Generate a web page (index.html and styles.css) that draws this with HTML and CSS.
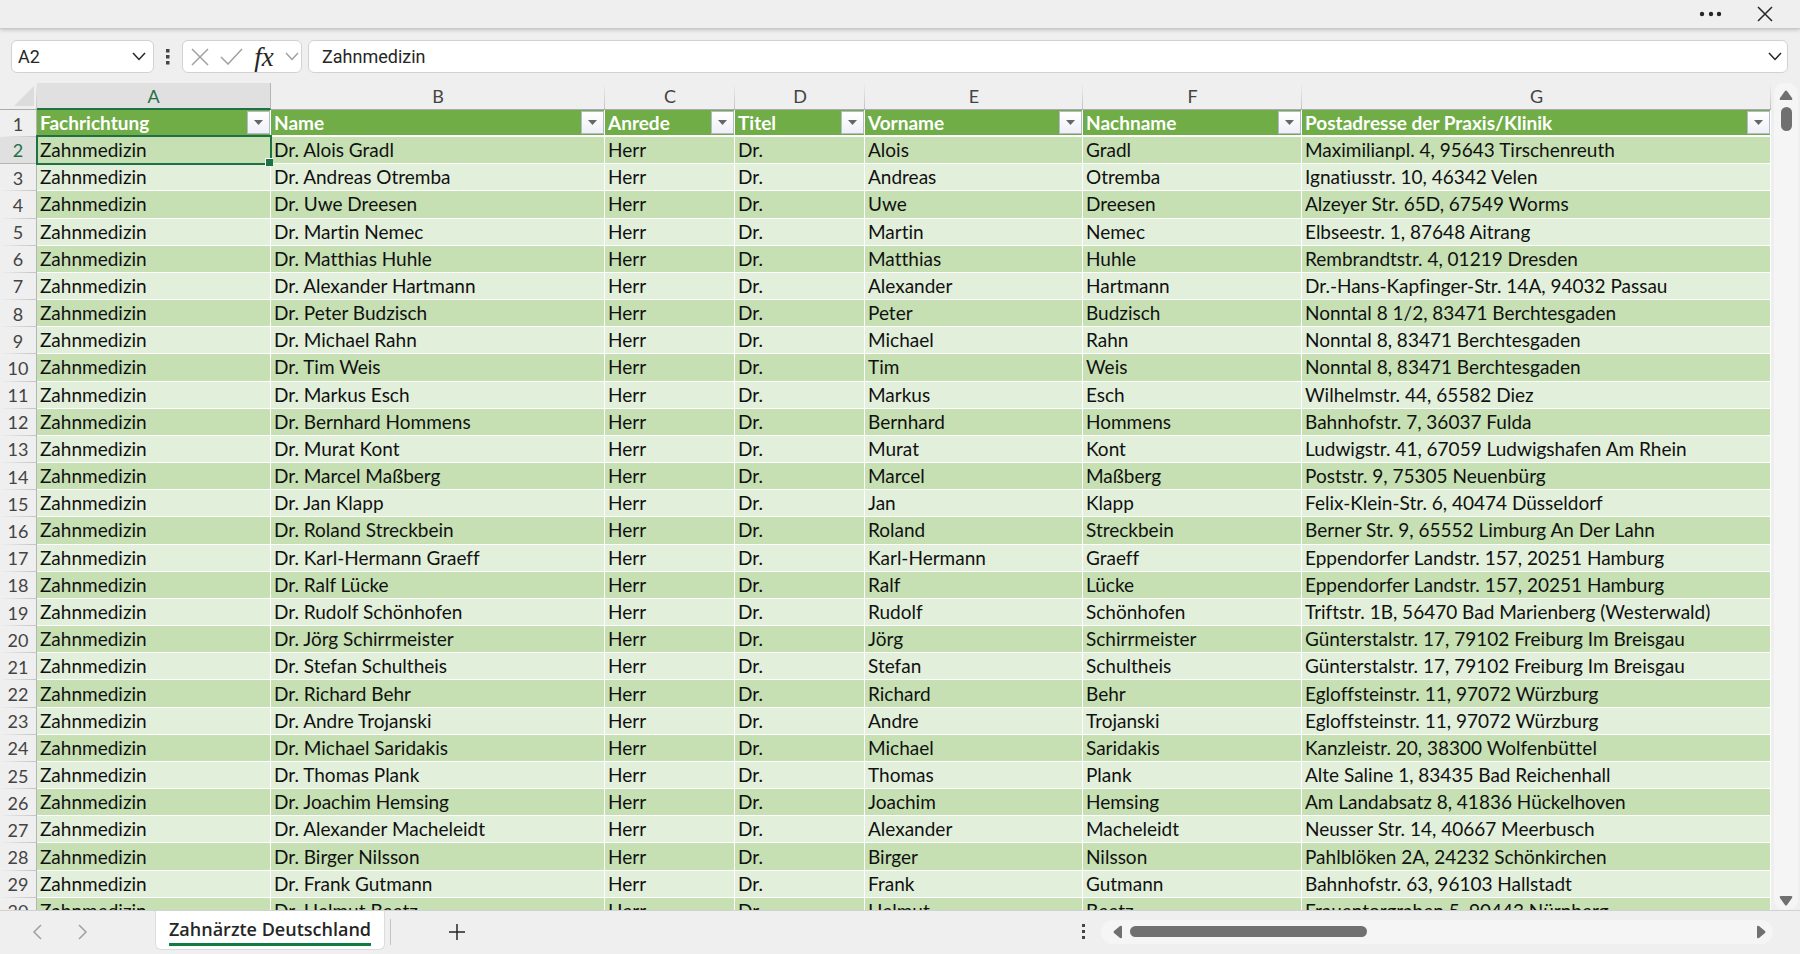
FILE: index.html
```html
<!DOCTYPE html>
<html lang="de">
<head>
  <meta charset="UTF-8" />
  <meta name="viewport" content="width=device-width, initial-scale=1.0"/>
  <title>Zahnärzte Deutschland</title>
  <link rel="stylesheet" href="styles.css">
</head>
<body>

<header class="title-bar">
  <button class="icon-btn" aria-label="Mehr">
    <svg width="24" height="8" viewBox="0 0 24 8"><circle cx="3" cy="4" r="2.2"/><circle cx="12" cy="4" r="2.2"/><circle cx="20" cy="4" r="2.2"/></svg>
  </button>
  <button class="icon-btn" aria-label="Schließen">
    <svg class="line" width="16" height="16" viewBox="0 0 16 16"><path d="M1 1l14 14M15 1L1 15"/></svg>
  </button>
</header>

<div class="formula-bar">
  <div class="box name-box">
    <input type="text" value="A2" aria-label="Namenfeld">
    <button class="icon-btn" aria-label="Namen anzeigen">
      <svg class="line" width="14" height="9" viewBox="0 0 14 9"><path d="M1 1l6 6.500l6-6.500"/></svg>
    </button>
  </div>
  <svg class="dots" width="4" height="16" viewBox="0 0 4 16"><path d="M0 0h3.500v3.500H0zM0 6h3.500v3.500H0zM0 12h3.500v3.500H0z"/></svg>
  <div class="box fx-box">
    <button class="icon-btn muted" aria-label="Abbrechen">
      <svg class="line" width="18" height="18" viewBox="0 0 18 18"><path d="M1 1l16 16M17 1L1 17"/></svg>
    </button>
    <button class="icon-btn muted" aria-label="Eingeben">
      <svg class="line" width="23" height="17" viewBox="0 0 23 17"><path d="M1 9l7 7L22 1"/></svg>
    </button>
    <button class="icon-btn fx" aria-label="Funktion einfügen">fx</button>
    <button class="icon-btn muted" aria-label="Funktionen">
      <svg class="line" width="14" height="9" viewBox="0 0 14 9"><path d="M1 1l6 6.500l6-6.500"/></svg>
    </button>
  </div>
  <div class="box formula-box">
    <input type="text" value="Zahnmedizin" aria-label="Bearbeitungsleiste">
    <button class="icon-btn" aria-label="Erweitern">
      <svg class="line" width="14" height="9" viewBox="0 0 14 9"><path d="M1 1l6 6.500l6-6.500"/></svg>
    </button>
  </div>
</div>

<main class="sheet">
  <div class="grid">
    <table>
      <colgroup>
        <col class="col-num"><col class="col-a"><col class="col-b"><col class="col-c"><col class="col-d"><col class="col-e"><col class="col-f"><col class="col-g">
      </colgroup>
      <thead>
        <tr class="letters">
          <th class="corner"><svg width="20" height="20" viewBox="0 0 20 20"><path d="M20 0v20H0z"/></svg></th>
          <th class="active">A</th><th>B</th><th>C</th><th>D</th><th>E</th><th>F</th><th>G</th>
        </tr>
        <tr class="fields" id="fields"><th class="num">1</th></tr>
      </thead>
      <tbody id="rows"></tbody>
    </table>
  </div>
  <div class="v-scroll">
    <svg width="14" height="11" viewBox="0 0 14 11"><path d="M6 1Q7 0 8 1L13 8Q14 10 12 10H2Q0 10 1 8z"/></svg>
    <div class="v-thumb"></div>
    <svg class="down" width="14" height="11" viewBox="0 0 14 11"><path d="M6 10Q7 11 8 10L13 3Q14 1 12 1H2Q0 1 1 3z"/></svg>
  </div>
</main>

<footer class="tab-bar">
  <button class="icon-btn muted prev" aria-label="Vorheriges Blatt">
    <svg class="line" width="10" height="16" viewBox="0 0 10 16"><path d="M9 1L2 8l7 7"/></svg>
  </button>
  <button class="icon-btn muted next" aria-label="Nächstes Blatt">
    <svg class="line" width="10" height="16" viewBox="0 0 10 16"><path d="M1 1l7 7l-7 7"/></svg>
  </button>
  <button class="tab"><span>Zahnärzte Deutschland</span></button>
  <div class="divider"></div>
  <button class="icon-btn add" aria-label="Neues Blatt">
    <svg class="line" width="16" height="16" viewBox="0 0 16 16"><path d="M8 0v16M0 8h16"/></svg>
  </button>
  <svg class="dots" width="4" height="16" viewBox="0 0 4 16"><path d="M0 0h3v3H0zM0 6h3v3H0zM0 12h3v3H0z"/></svg>
  <div class="h-scroll">
    <svg width="10" height="14" viewBox="0 0 10 14"><path d="M1 6Q0 7 1 8L7 13Q9 14 9 12V2Q9 0 7 1z"/></svg>
    <div class="h-thumb"></div>
    <svg class="right" width="10" height="14" viewBox="0 0 10 14"><path d="M9 6Q10 7 9 8L3 13Q1 14 1 12V2Q1 0 3 1z"/></svg>
  </div>
</footer>

<script>
const fields = ['Fachrichtung', 'Name', 'Anrede', 'Titel', 'Vorname', 'Nachname', 'Postadresse der Praxis/Klinik'];

// Vorname, Nachname, Postadresse
const people = [
  ['Alois', 'Gradl', 'Maximilianpl. 4, 95643 Tirschenreuth'],
  ['Andreas', 'Otremba', 'Ignatiusstr. 10, 46342 Velen'],
  ['Uwe', 'Dreesen', 'Alzeyer Str. 65D, 67549 Worms'],
  ['Martin', 'Nemec', 'Elbseestr. 1, 87648 Aitrang'],
  ['Matthias', 'Huhle', 'Rembrandtstr. 4, 01219 Dresden'],
  ['Alexander', 'Hartmann', 'Dr.-Hans-Kapfinger-Str. 14A, 94032 Passau'],
  ['Peter', 'Budzisch', 'Nonntal 8 1/2, 83471 Berchtesgaden'],
  ['Michael', 'Rahn', 'Nonntal 8, 83471 Berchtesgaden'],
  ['Tim', 'Weis', 'Nonntal 8, 83471 Berchtesgaden'],
  ['Markus', 'Esch', 'Wilhelmstr. 44, 65582 Diez'],
  ['Bernhard', 'Hommens', 'Bahnhofstr. 7, 36037 Fulda'],
  ['Murat', 'Kont', 'Ludwigstr. 41, 67059 Ludwigshafen Am Rhein'],
  ['Marcel', 'Maßberg', 'Poststr. 9, 75305 Neuenbürg'],
  ['Jan', 'Klapp', 'Felix-Klein-Str. 6, 40474 Düsseldorf'],
  ['Roland', 'Streckbein', 'Berner Str. 9, 65552 Limburg An Der Lahn'],
  ['Karl-Hermann', 'Graeff', 'Eppendorfer Landstr. 157, 20251 Hamburg'],
  ['Ralf', 'Lücke', 'Eppendorfer Landstr. 157, 20251 Hamburg'],
  ['Rudolf', 'Schönhofen', 'Triftstr. 1B, 56470 Bad Marienberg (Westerwald)'],
  ['Jörg', 'Schirrmeister', 'Günterstalstr. 17, 79102 Freiburg Im Breisgau'],
  ['Stefan', 'Schultheis', 'Günterstalstr. 17, 79102 Freiburg Im Breisgau'],
  ['Richard', 'Behr', 'Egloffsteinstr. 11, 97072 Würzburg'],
  ['Andre', 'Trojanski', 'Egloffsteinstr. 11, 97072 Würzburg'],
  ['Michael', 'Saridakis', 'Kanzleistr. 20, 38300 Wolfenbüttel'],
  ['Thomas', 'Plank', 'Alte Saline 1, 83435 Bad Reichenhall'],
  ['Joachim', 'Hemsing', 'Am Landabsatz 8, 41836 Hückelhoven'],
  ['Alexander', 'Macheleidt', 'Neusser Str. 14, 40667 Meerbusch'],
  ['Birger', 'Nilsson', 'Pahlblöken 2A, 24232 Schönkirchen'],
  ['Frank', 'Gutmann', 'Bahnhofstr. 63, 96103 Hallstadt'],
  ['Helmut', 'Beetz', 'Frauentorgraben 5, 90443 Nürnberg']
];

fields.forEach(name => {
  const th = document.createElement('th');
  th.innerHTML = `<div class="field"><span>${name}</span><button class="filter" aria-label="${name} filtern"><svg width="9" height="5" viewBox="0 0 9 5"><path d="M0 0h9L4.500 5z"/></svg></button></div>`;
  document.getElementById('fields').appendChild(th);
});

people.forEach(([first, last, address], i) => {
  const tr = document.createElement('tr');
  const num = document.createElement('th');
  num.className = i === 0 ? 'num active' : 'num';
  num.textContent = i + 2;
  tr.appendChild(num);

  ['Zahnmedizin', `Dr. ${first} ${last}`, 'Herr', 'Dr.', first, last, address].forEach((text, c) => {
    const td = document.createElement('td');
    td.textContent = text;
    if (i === 0 && c === 0) td.className = 'selected';
    tr.appendChild(td);
  });
  document.getElementById('rows').appendChild(tr);
});
</script>

</body>
</html>
```
FILE: styles.css
```css
:root {
  --chrome: #efefef;
  --line: #d2d2d2;
  --accent: #1e7145;
  --head-green: #70ad47;
  --row-dark: #c6e0b4;
  --row-light: #e2efda;
  --thumb: #707070;
}

* {
  box-sizing: border-box;
}
body {
  margin: 0;
  height: 100vh;
  display: flex;
  flex-direction: column;
  overflow: hidden;
  background: var(--chrome);
  color: #262626;
  font-family: Lato, "Noto Sans", sans-serif;
  font-size: 18px;
}
svg {
  display: block;
  fill: currentColor;
}
svg.line {
  fill: none;
  stroke: currentColor;
  stroke-width: 1.5;
}
button {
  font: inherit;
  color: inherit;
}
.icon-btn {
  display: flex;
  align-items: center;
  justify-content: center;
  padding: 0;
  border: none;
  background: none;
}
.muted {
  color: #a0a0a0;
}
.dots {
  flex: none;
  color: #444;
}

.title-bar {
  flex: none;
  display: flex;
  align-items: center;
  justify-content: flex-end;
  gap: 34px;
  height: 29px;
  padding-right: 27px;
  border-bottom: 1px solid #cacaca;
  box-shadow: 0 1px 4px rgba(0, 0, 0, 0.2);
}

.formula-bar {
  flex: none;
  display: flex;
  align-items: center;
  height: 54px;
  padding: 2px 12px 1px 11px;
  font-family: Roboto, sans-serif;
}
.box {
  display: flex;
  align-items: center;
  height: 33px;
  border: 1px solid var(--line);
  border-radius: 6px;
  background: #fff;
}
.box input {
  flex: 1;
  min-width: 0;
  padding: 0;
  border: none;
  outline: none;
  background: none;
  font: inherit;
  color: inherit;
}
.name-box {
  width: 143px;
  padding: 0 7px 0 6px;
}
.formula-bar .dots {
  margin: 0 12px;
}
.fx-box {
  width: 120px;
  padding: 0 2px 0 8px;
  justify-content: space-between;
}
.fx {
  font-family: "Liberation Serif", serif;
  font-style: italic;
  font-size: 27px;
  line-height: 30px;
}
.formula-box {
  flex: 1;
  margin-left: 6px;
  padding: 0 5px 0 13px;
}

.sheet {
  flex: 1;
  min-height: 0;
  display: flex;
  justify-content: space-between;
}
.grid {
  flex: 1;
  overflow: hidden;
}
table {
  table-layout: fixed;
  width: 100%;
  height: 842px;
  border-collapse: separate;
  border-spacing: 0;
  color: #111;
  font-size: 19px;
  font-variant-ligatures: none;
}
.col-num { width: 37px; }
.col-a { width: 234px; }
.col-b { width: 334px; }
.col-c, .col-d { width: 130px; }
.col-e { width: 218px; }
.col-f { width: 219px; }
tr {
  height: 27px;
}
th, td {
  padding: 0;
  overflow: hidden;
  white-space: nowrap;
  line-height: 24px;
}
td {
  padding-left: 3px;
  border-right: 1px solid #fff;
  border-bottom: 1px solid #fff;
}
tbody tr:nth-child(odd) td {
  background: var(--row-dark);
}
tbody tr:nth-child(even) td {
  background: var(--row-light);
}

/* separators fade out towards the outer edge */
.letters th {
  border-bottom: 1px solid #ababab;
  background: linear-gradient(var(--chrome), #c4c4c4) right / 1px 100% no-repeat;
  font-size: 18px;
  font-weight: normal;
  color: #444;
}
.letters .corner {
  color: #dcdcdc;
}
.corner svg {
  margin-left: 14px;
}
.letters .active {
  border-right: 1px solid #b5b5b5;
  border-bottom: 2px solid var(--accent);
  background: #e0e0e0;
  color: var(--accent);
}
.num {
  border-right: 1px solid #b5b5b5;
  background: linear-gradient(to right, var(--chrome), #c4c4c4) bottom / 100% 1px no-repeat;
  font-size: 18px;
  font-weight: normal;
  color: #444;
}
.num.active {
  border-bottom: 1px solid #b5b5b5;
  background: #e0e0e0;
  color: var(--accent);
}

.fields th:not(.num) {
  border-right: 1px solid #fff;
  border-bottom: 2px solid #fff;
  background: var(--head-green);
  color: #fff;
  text-align: left;
}
.field {
  display: flex;
  align-items: center;
  justify-content: space-between;
  padding-left: 3px;
}
.filter {
  display: flex;
  align-items: center;
  justify-content: center;
  width: 23px;
  height: 23px;
  padding: 0;
  border: 1px solid #b4b9cc;
  background: linear-gradient(#fff, #eef0f6);
  color: #666;
}

.selected {
  position: relative;
  overflow: visible;
}
.selected::before {
  content: "";
  position: absolute;
  inset: -2px -2px -2px -1px;
  border: 2px solid var(--accent);
}
.selected::after {
  content: "";
  position: absolute;
  right: -3px;
  bottom: -3px;
  width: 7px;
  height: 7px;
  border: solid #fff;
  border-width: 1px 0 0 1px;
  background: var(--accent);
}

.v-scroll {
  flex: none;
  width: 24px;
  margin: 0 2px 0 3px;
  padding: 7px 0 4px;
  display: flex;
  flex-direction: column;
  align-items: center;
  border-radius: 10px;
  background: #f5f5f5;
  color: var(--thumb);
}
.v-thumb {
  width: 11px;
  height: 24px;
  margin-top: 6px;
  border-radius: 6px;
  background: var(--thumb);
}
.down {
  margin-top: auto;
}

.tab-bar {
  flex: none;
  display: flex;
  align-items: center;
  height: 44px;
  padding: 0 0 2px 32px;
  border-top: 1px solid var(--line);
}
.next {
  margin-left: 36px;
}
.tab {
  align-self: flex-start;
  height: 39px;
  margin-left: 67px;
  padding: 0 13px;
  border: 1px solid #ddd;
  border-top: none;
  border-radius: 0 0 6px 6px;
  background: #fff;
  font-family: "Open Sans", sans-serif;
  font-size: 18px;
  font-weight: 600;
}
.tab span {
  display: block;
  line-height: 28px;
  border-bottom: 3px solid #107c41;
}
.divider {
  width: 1px;
  height: 26px;
  margin-left: 5px;
  background: #c4c4c4;
}
.add {
  margin-left: 58px;
}
.tab-bar > .dots {
  margin-left: auto;
}
.h-scroll {
  width: 38%;
  height: 24px;
  margin: 0 27px 0 15px;
  padding: 0 7px 0 12px;
  display: flex;
  align-items: center;
  border-radius: 12px;
  background: #f5f5f5;
  color: var(--thumb);
}
.h-thumb {
  width: 237px;
  height: 11px;
  margin-left: 7px;
  border-radius: 6px;
  background: var(--thumb);
}
.right {
  margin-left: auto;
}
```
